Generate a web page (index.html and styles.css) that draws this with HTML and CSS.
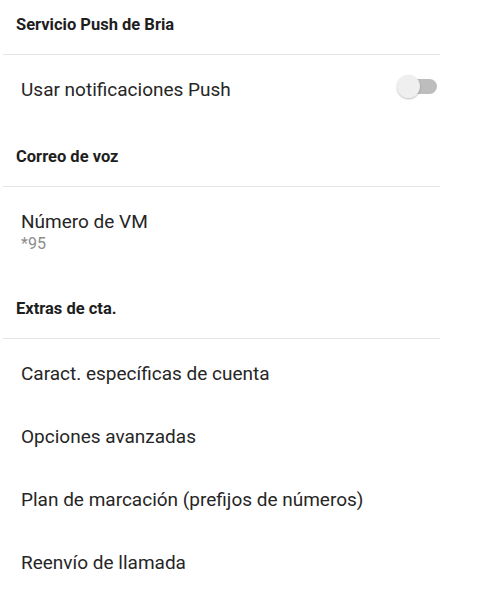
FILE: index.html
```html
<!DOCTYPE html>
<html>
<head>
    <title>Ajustes de cuenta</title>
    <link rel="stylesheet" href="styles.css">
</head>
<body>
    <div class="prefs">
        <div class="category">Servicio Push de Bria</div>
        <div class="pref">
            <div class="pref-text">
                <div class="title">Usar notificaciones Push</div>
            </div>
            <div class="switch">
                <span class="thumb"></span>
            </div>
        </div>

        <div class="category">Correo de voz</div>
        <div class="pref">
            <div class="pref-text">
                <div class="title">Número de VM</div>
                <div class="summary">*95</div>
            </div>
        </div>

        <div class="category">Extras de cta.</div>
        <div class="pref">
            <div class="pref-text">
                <div class="title">Caract. específicas de cuenta</div>
            </div>
        </div>
        <div class="pref">
            <div class="pref-text">
                <div class="title">Opciones avanzadas</div>
            </div>
        </div>
        <div class="pref">
            <div class="pref-text">
                <div class="title">Plan de marcación (prefijos de números)</div>
            </div>
        </div>
        <div class="pref">
            <div class="pref-text">
                <div class="title">Reenvío de llamada</div>
            </div>
        </div>
    </div>
</body>
</html>
```

FILE: styles.css
```css
body {
    font-family: Roboto, 'Liberation Sans', sans-serif;
    background-color: #ffffff;
    color: #212121;
    margin: 0;
}

.prefs {
    width: 437px;
    margin-left: 3px;
}

.category {
    padding: 29px 13px 19px;
    font-size: 16.5px;
    font-weight: bold;
    line-height: 20px;
    color: #1e1e1e;
    border-bottom: 1px solid #e4e4e4;
}

.category:first-child {
    padding-top: 15px;
}

.pref {
    display: flex;
    align-items: center;
    min-height: 63px;
    padding: 0 3px 0 18px;
}

.pref-text {
    flex: 1;
    align-self: flex-start;
    padding: 23px 0 16px;
}

.title {
    font-size: 19px;
    line-height: 24px;
    color: #262626;
}

.summary {
    font-size: 16px;
    line-height: 20px;
    color: #8c8c8c;
}

.switch {
    position: relative;
    width: 37px;
    height: 15px;
    border-radius: 8px;
    background-color: #bdbdbd;
}

.thumb {
    position: absolute;
    left: -3px;
    top: -4px;
    width: 23px;
    height: 23px;
    border-radius: 50%;
    background-color: #efefef;
    box-shadow: 0 1px 2px rgba(0,0,0,0.25);
}
```
